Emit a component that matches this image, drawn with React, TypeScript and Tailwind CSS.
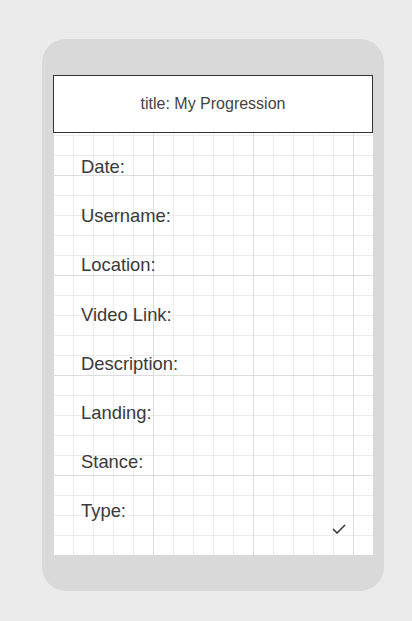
import React from 'react';

const fields = ['Date:', 'Username:', 'Location:', 'Video Link:', 'Description:', 'Landing:', 'Stance:', 'Type:'];

export default function App() {
  return (
    <div className="min-h-[621px] w-[412px] bg-[#ebebeb] pl-[42px] pt-[39px] font-['Liberation_Sans',Arial,sans-serif]">
      <div className="flex h-[552px] w-[342px] flex-col rounded-[24px] bg-[#d9d9d9] px-[11px] pt-[36px]">
        <div className="flex h-[58px] items-center justify-center border border-[#333] bg-white text-[16px] text-[#444]">
          title: My Progression
        </div>
        <div className="flex h-[422px] flex-col bg-white bg-[image:linear-gradient(to_right,#dcdcdc_1px,transparent_1px),linear-gradient(to_bottom,#dcdcdc_1px,transparent_1px),linear-gradient(to_right,#ebebeb_1px,transparent_1px),linear-gradient(to_bottom,#ebebeb_1px,transparent_1px)] bg-[length:100px_100px,100px_100px,20px_20px,20px_20px] bg-[position:0_42px,0_42px,0_2px,0_2px] pl-[28px] pt-[23px]">
          <div className="flex flex-col gap-[28.2px]">
            {fields.map((f) => (
              <div key={f} className="text-[18.4px] leading-[21px] text-[#3a3a3a]">
                {f}
              </div>
            ))}
          </div>
          <div className="flex justify-end pr-[27px] pt-[3px]">
            <svg width="14" height="10" viewBox="0 0 14 10" fill="none">
              <path d="M1 5 L5 9 L13 1" stroke="#333" strokeWidth="1.5" />
            </svg>
          </div>
        </div>
      </div>
    </div>
  );
}
